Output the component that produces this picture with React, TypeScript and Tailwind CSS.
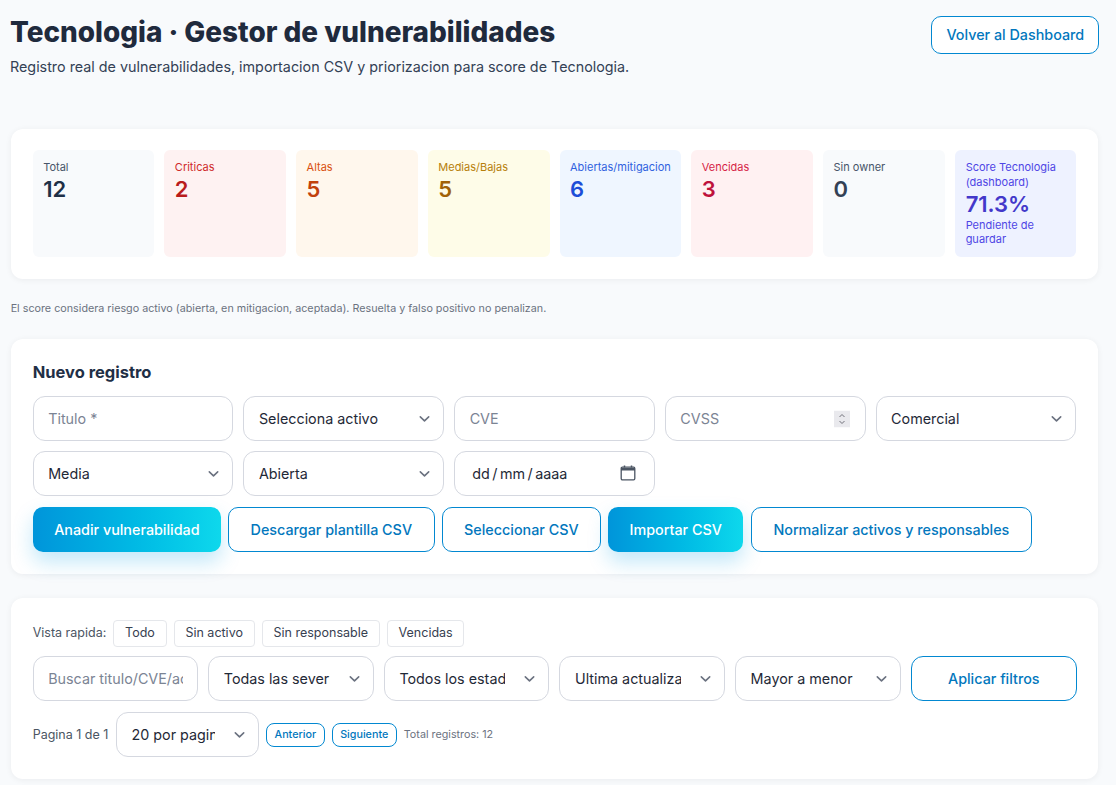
import React from "react";

const inter = "font-['Inter','Noto_Sans',sans-serif]";

function Chevron({ className = "" }: { className?: string }) {
  return (
    <svg width="11" height="7" viewBox="0 0 12 8" fill="none" className={`pointer-events-none absolute top-1/2 -translate-y-1/2 ${className}`}>
      <path d="M1.2 1.6 6 6.2l4.8-4.6" stroke="#6b7280" strokeWidth="1.8" strokeLinecap="round" strokeLinejoin="round" />
    </svg>
  );
}

function Select({ value, wide = false, className = "" }: { value: string; wide?: boolean; className?: string }) {
  return (
    <div className={`relative min-w-0 ${className}`}>
      <select
        defaultValue={value}
        className={`h-[45px] w-full appearance-none rounded-[12px] border border-[#d5d8e0] bg-white pl-[14.5px] pt-[1px] text-[14.33px] text-[#1f2937] outline-none ${wide ? "pr-[43px]" : "pr-[40px]"}`}
      >
        <option>{value}</option>
      </select>
      <Chevron className="right-[14px]" />
    </div>
  );
}

function Field({ placeholder, children }: { placeholder: string; children?: React.ReactNode }) {
  return (
    <div className="relative min-w-0">
      <input
        placeholder={placeholder}
        className="h-[45px] w-full rounded-[12px] border border-[#d5d8e0] bg-white px-[14.5px] text-[14.33px] text-[#1f2937] outline-none placeholder:text-[#7b8494]"
      />
      {children}
    </div>
  );
}

function Kpi({ label, value, box, text, val }: { label: string; value: string; box: string; text: string; val: string }) {
  return (
    <div className={`rounded-[6px] px-[10.5px] pb-[10px] pt-[11px] ${box}`}>
      <div className={`text-[11px] leading-[13px] ${text}`}>{label}</div>
      <div className={`mt-[2px] text-[22px] font-semibold leading-[27px] ${val}`}>{value}</div>
    </div>
  );
}

function Primary({ children }: { children: React.ReactNode }) {
  return (
    <button className="h-[45px] rounded-[10px] bg-gradient-to-r from-[#0095da] to-[#0ed8ec] px-[21.5px] text-[14.33px] font-medium text-white shadow-[0_10px_20px_rgba(14,165,233,0.25)]">
      {children}
    </button>
  );
}

function Outline({ children, className = "h-[45px] px-[21.5px]" }: { children: React.ReactNode; className?: string }) {
  return (
    <button className={`rounded-[10px] border border-[#0288d1] bg-white text-[14.33px] font-medium text-[#0277bd] ${className}`}>
      {children}
    </button>
  );
}

function Chip({ children }: { children: React.ReactNode }) {
  return (
    <button className="h-[27px] rounded-[4px] border border-[#e5e7eb] bg-white px-[10.8px] text-[12.5px] text-[#374151]">{children}</button>
  );
}

function Card({ className = "", children }: { className?: string; children: React.ReactNode }) {
  return <section className={`rounded-[12px] bg-white px-[22px] shadow-[0_1px_6px_rgba(15,23,42,0.06)] ${className}`}>{children}</section>;
}

export default function App() {
  return (
    <div className={`${inter} h-[785px] overflow-hidden bg-[#f8fafc] pl-[10.67px] pr-[17.67px] pt-[10px]`}>
      <header className="flex items-start justify-between">
        <div className="-ml-[0.67px]">
          <h1 className="text-[27.9px] font-extrabold leading-[44px] text-[#1f2a3d]">Tecnologia · Gestor de vulnerabilidades</h1>
          <p className="mt-[3px] text-[14.33px] leading-[20px] text-[#334155]">Registro real de vulnerabilidades, importacion CSV y priorizacion para score de Tecnologia.</p>
        </div>
        <Outline className="-mr-[1px] mt-[6px] h-[38px] w-[168px]">Volver al Dashboard</Outline>
      </header>

      <Card className="mt-[52px] pb-[22px] pt-[21px]">
        <div className="grid grid-cols-8 gap-[10px]">
          <Kpi label="Total" value="12" box="bg-[#f8fafc]" text="text-[#475569]" val="text-[#1f3047]" />
          <Kpi label="Criticas" value="2" box="bg-[#fef2f2]" text="text-[#cf2a2a]" val="text-[#b91c1c]" />
          <Kpi label="Altas" value="5" box="bg-[#fff7ed]" text="text-[#d9500f]" val="text-[#c2410c]" />
          <Kpi label="Medias/Bajas" value="5" box="bg-[#fefce8]" text="text-[#b77f0a]" val="text-[#a16207]" />
          <Kpi label="Abiertas/mitigacion" value="6" box="bg-[#eff6ff]" text="text-[#2f62e0]" val="text-[#1d4ed8]" />
          <Kpi label="Vencidas" value="3" box="bg-[#fff1f2]" text="text-[#d61f47]" val="text-[#be123c]" />
          <Kpi label="Sin owner" value="0" box="bg-[#f8fafc]" text="text-[#475569]" val="text-[#334155]" />
          <div className="rounded-[6px] bg-[#eef2ff] px-[11px] pb-[11px] pt-[10px] text-[#4f46e5]">
            <div className="text-[11px] leading-[15px]">Score Tecnologia (dashboard)</div>
            <div className="text-[22px] font-semibold leading-[28px] text-[#4338ca]">71.3%</div>
            <div className="text-[11px] leading-[14px]">Pendiente de guardar</div>
          </div>
        </div>
      </Card>

      <p className="mt-[23px] text-[10.75px] leading-[14px] text-[#6b7280]">El score considera riesgo activo (abierta, en mitigacion, aceptada). Resuelta y falso positivo no penalizan.</p>

      <Card className="mt-[23px] pb-[22px] pt-[21px]">
        <h2 className="text-[16.5px] font-bold leading-[24px] text-[#1f2f46]">Nuevo registro</h2>
        <div className="mt-[12px] grid grid-cols-5 gap-[10px]">
          <Field placeholder="Titulo *" />
          <Select value="Selecciona activo" />
          <Field placeholder="CVE" />
          <Field placeholder="CVSS">
            <svg width="16" height="17" viewBox="0 0 16 17" className="absolute right-[16px] top-1/2 -translate-y-1/2">
              <rect width="16" height="17" fill="#e9e9ed" />
              <path d="M5.5 6.5 8 4l2.5 2.5M5.5 10.5 8 13l2.5-2.5" fill="none" stroke="#71717a" strokeWidth="1" />
            </svg>
          </Field>
          <Select value="Comercial" />
          <Select value="Media" />
          <Select value="Abierta" />
          <div className="relative flex h-[45px] items-center rounded-[12px] border border-[#d5d8e0] bg-white pl-[17px] text-[14.33px] text-[#1f2937] [word-spacing:-1.5px]">
            dd / mm / aaaa
            <svg width="16" height="16" viewBox="0 0 16 16" fill="none" className="absolute right-[18px] top-[13px]">
              <path d="M4.5 0.5v2M11.5 0.5v2" stroke="#4b5563" strokeWidth="1.5" />
              <rect x="1.2" y="2.2" width="13.6" height="12.6" rx="1.2" stroke="#4b5563" strokeWidth="1.3" />
              <path d="M1 3h14v2.5H1z" fill="#4b5563" />
            </svg>
          </div>
        </div>
        <div className="mt-[11px] flex gap-[7px]">
          <Primary>Anadir vulnerabilidad</Primary>
          <Outline>Descargar plantilla CSV</Outline>
          <Outline>Seleccionar CSV</Outline>
          <Primary>Importar CSV</Primary>
          <Outline className="ml-[0.5px] h-[45px] px-[21.5px]">Normalizar activos y responsables</Outline>
        </div>
      </Card>

      <Card className="mt-[24px] pb-[22px] pt-[22px]">
        <div className="flex items-center gap-[7px] text-[12.5px] text-[#4b5563]">
          <span>Vista rapida:</span>
          <Chip>Todo</Chip>
          <Chip>Sin activo</Chip>
          <Chip>Sin responsable</Chip>
          <Chip>Vencidas</Chip>
        </div>
        <div className="mt-[9px] grid grid-cols-6 gap-[10px]">
          <Field placeholder="Buscar titulo/CVE/activo" />
          <Select value="Todas las severidades" wide />
          <Select value="Todos los estados" wide />
          <Select value="Ultima actualizacion" wide />
          <Select value="Mayor a menor" wide />
          <Outline className="h-[45px] w-[calc(100%+0.5px)] rounded-[12px]">Aplicar filtros</Outline>
        </div>
        <div className="mt-[11px] flex items-center gap-[7px]">
          <span className="mt-[1px] text-[12.5px] text-[#4b5563]">Pagina 1 de 1</span>
          <Select value="20 por pagina" wide className="ml-[0.6px] w-[143px]" />
          <button className="mt-[1px] h-[24px] rounded-[8px] border border-[#0288d1] px-[7.5px] text-[10.75px] font-medium text-[#0277bd]">Anterior</button>
          <button className="mt-[1px] h-[24px] rounded-[8px] border border-[#0288d1] px-[7.5px] text-[10.75px] font-medium text-[#0277bd]">Siguiente</button>
          <span className="mt-[1px] text-[10.75px] text-[#6b7280]">Total registros: 12</span>
        </div>
      </Card>
    </div>
  );
}
